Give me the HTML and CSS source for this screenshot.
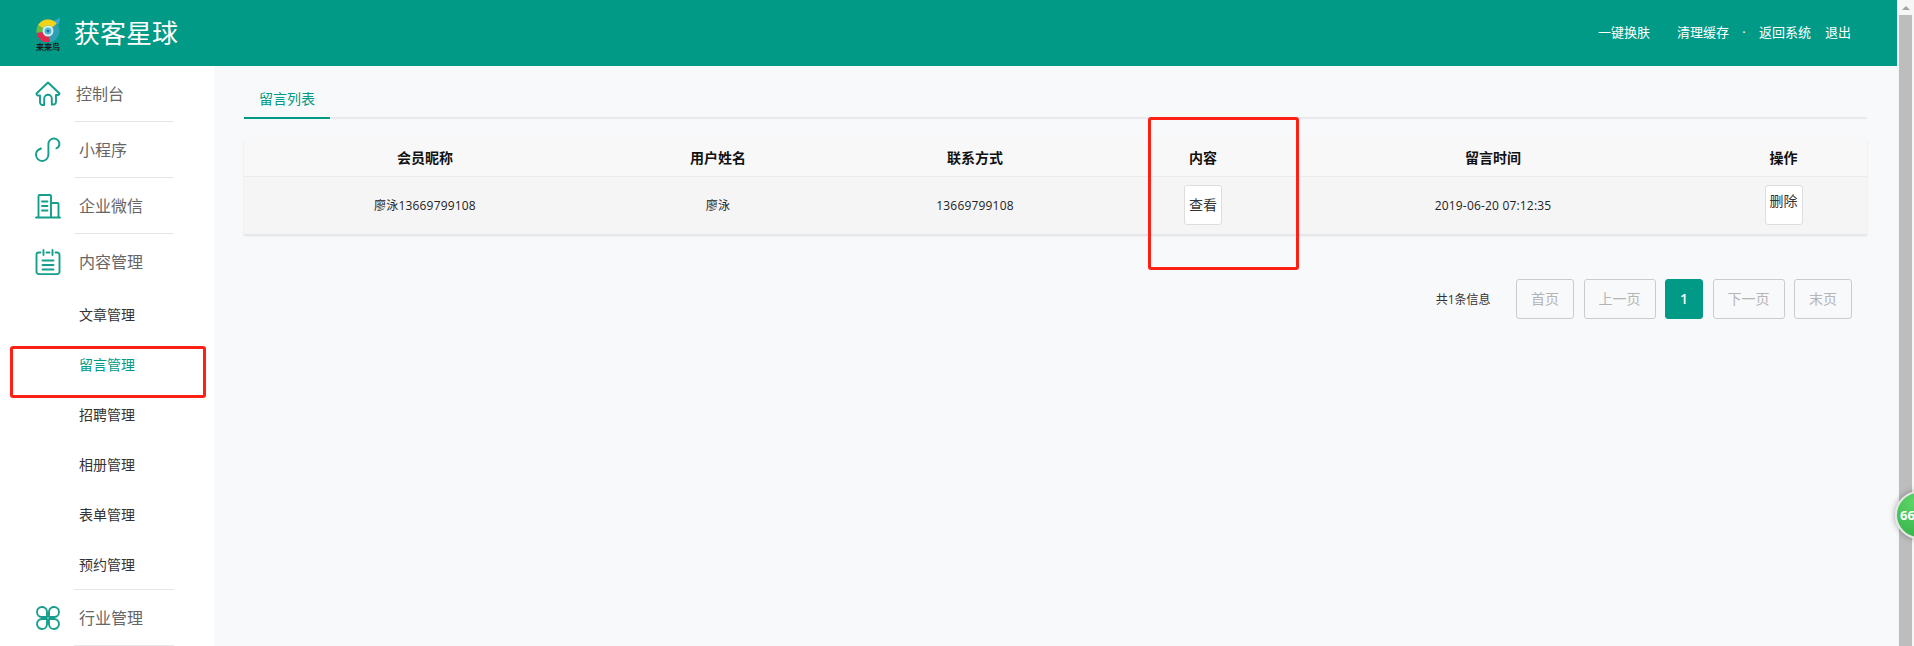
FILE: index.html
```html
<!DOCTYPE html>
<html lang="zh-CN">
<head>
<meta charset="utf-8">
<title>留言管理</title>
<link rel="stylesheet" href="styles.css">
</head>
<body>
<div class="page">
  <div class="main">
    <header class="topbar">
      <div class="brand">
        <div class="logo">
          <svg class="logo-mark" viewBox="0 0 24 25" width="24" height="25">
            <path d="M17 4c3-1 6-2 7-4 0 4-1 8-4 10z" fill="#35a9d8"/>
            <circle cx="12" cy="14" r="8.500" fill="none" stroke="#2f9fb4" stroke-width="6"/>
            <path d="M4.600 9.750A8.500 8.500 0 0 1 18.500 8.500" fill="none" stroke="#f4d21a" stroke-width="6"/>
            <path d="M3.640 15.500A8.500 8.500 0 0 1 4.600 9.750" fill="none" stroke="#6dbb3a" stroke-width="6"/>
            <path d="M13.500 22.400A8.500 8.500 0 0 1 3.640 15.500" fill="none" stroke="#e02a4d" stroke-width="6"/>
            <circle cx="12" cy="14" r="5.500" fill="#d5eef2"/>
            <circle cx="12" cy="14" r="3.500" fill="#4fbcd0"/>
            <circle cx="12" cy="14" r="1.500" fill="#1f6fb0"/>
          </svg>
          <span class="logo-text">来来鸟</span>
        </div>
        <span class="brand-name">获客星球</span>
      </div>
      <nav class="top-links">
        <a class="top-link link-skin">一键换肤</a>
        <a class="top-link">清理缓存</a>
        <span class="top-dot">·</span>
        <a class="top-link">返回系统</a>
        <a class="top-link link-exit">退出</a>
      </nav>
    </header>
    <div class="body">
      <aside class="sidebar">
        <div class="nav-group">
          <svg class="nav-icon" viewBox="0 0 26 26"><path d="M1.500 12.500 13 1.500l11.500 11a2 2 0 0 1-2.600 1.500H21v7a2.800 2.800 0 0 1-2.800 2.500h-1.400V17.500a3.800 3.800 0 0 0-7.600 0v6.500H7.800A2.800 2.800 0 0 1 5 21.500v-7H4.100a2 2 0 0 1-2.600-2z"/></svg>
          <span class="nav-label label-console">控制台</span>
        </div>
        <div class="nav-group">
          <svg class="nav-icon" viewBox="0 0 26 26"><path d="M6 11.500C3 12.500 1 15 1 17.800a6.200 6.200 0 0 0 12.400 0V7a5.500 5.500 0 0 1 11 0c0 2-1 3.500-3 4.300"/></svg>
          <span class="nav-label">小程序</span>
        </div>
        <div class="nav-group">
          <svg class="nav-icon" viewBox="0 0 26 26"><path d="M1 24.500h24M3.500 24V3a1 1 0 0 1 1-1h10.500a1 1 0 0 1 1 1V24M16 10h6.500a1 1 0 0 1 1 1V24M7 8.500h5.500M7 13h5.500M7 17.500h5.500"/></svg>
          <span class="nav-label">企业微信</span>
        </div>
        <div class="nav-group group-open">
          <svg class="nav-icon" viewBox="0 0 26 26"><path d="M5.500 3.500H3.800A2.300 2.300 0 0 0 1.500 5.800v17a2.300 2.300 0 0 0 2.300 2.300h18.400a2.300 2.300 0 0 0 2.300-2.300v-17a2.300 2.300 0 0 0-2.300-2.300h-1.700M8.500 1v5M17.500 1v5M11.500 3.500h3M7.500 11.500h11M7.500 16h11M7.500 20.500h11"/></svg>
          <span class="nav-label">内容管理</span>
        </div>
        <ul class="sub-nav">
          <li class="sub-item">文章管理</li>
          <li class="sub-item is-active">留言管理</li>
          <li class="sub-item">招聘管理</li>
          <li class="sub-item">相册管理</li>
          <li class="sub-item">表单管理</li>
          <li class="sub-item">预约管理</li>
        </ul>
        <div class="nav-group group-industry">
          <svg class="nav-icon" viewBox="0 0 26 26"><path d="M12 12H6.500A5 5 0 1 1 12 6.500zM14 12h5.500A5 5 0 1 0 14 6.500zM12 14H6.500A5 5 0 1 0 12 19.500zM14 14h5.500A5 5 0 1 1 14 19.500z"/></svg>
          <span class="nav-label">行业管理</span>
        </div>
      </aside>
      <main class="content">
        <div class="tabs"><span class="tab">留言列表</span></div>
        <table class="table">
          <colgroup>
            <col class="c1"><col class="c2"><col class="c3"><col class="c4"><col class="c5"><col class="c6">
          </colgroup>
          <thead>
            <tr><th>会员昵称</th><th>用户姓名</th><th>联系方式</th><th>内容</th><th>留言时间</th><th>操作</th></tr>
          </thead>
          <tbody>
            <tr>
              <td>廖泳13669799108</td>
              <td>廖泳</td>
              <td>13669799108</td>
              <td><button class="btn">查看</button></td>
              <td>2019-06-20 07:12:35</td>
              <td><button class="btn btn-top">删除</button></td>
            </tr>
          </tbody>
        </table>
        <div class="pager">
          <span class="pager-info">共1条信息</span>
          <span class="pg pg-2">首页</span>
          <span class="pg pg-3">上一页</span>
          <span class="pg pg-current">1</span>
          <span class="pg pg-3">下一页</span>
          <span class="pg pg-2">末页</span>
        </div>
      </main>
    </div>
  </div>
  <div class="scrollbar">
    <div class="sb-btn"><span class="sb-arrow"></span></div>
    <div class="sb-thumb"></div>
  </div>
  <div class="annot annot-nav"></div>
  <div class="annot annot-col"></div>
  <div class="ball"><span class="ball-num">66</span></div>
</div>
</body>
</html>
```

FILE: styles.css
```css
* { box-sizing: border-box; }
html, body { margin: 0; height: 100%; overflow: hidden; }
body {
  font-family: "Open Sans", "Noto Sans CJK SC", sans-serif;
  background: #f8f9fb;
  color: #333;
  font-size: 12px;
}
.page { position: relative; display: flex; width: 1914px; height: 646px; overflow: hidden; }
.main { flex: 1; min-width: 0; display: flex; flex-direction: column; }

.topbar {
  height: 66px;
  flex: none;
  background: #009a87;
  display: flex;
  align-items: center;
  justify-content: space-between;
  padding: 0 46px 0 35px;
  color: #fff;
}
.brand { display: flex; align-items: center; gap: 13px; }
.logo { width: 26px; display: flex; flex-direction: column; align-items: center; margin-top: 1px; }
.logo-mark { display: block; }
.logo-text { font-family: "Noto Sans CJK SC", serif; font-size: 8px; line-height: 9px; color: #1a1a1a; font-weight: 700; white-space: nowrap; }
.brand-name { font-size: 26px; line-height: 36px; margin-top: -3px; font-family: "Noto Sans CJK SC", sans-serif; }
.top-links { display: flex; align-items: center; font-size: 13px; line-height: 18px; margin-top: -2px; }
.top-link { display: block; }
.link-skin { margin-right: 27px; }
.top-dot { width: 30px; text-align: center; }
.link-exit { margin-left: 14px; }

.body { flex: 1; display: flex; min-height: 0; }
.sidebar { width: 214px; flex: none; background: #fff; }
.nav-group {
  height: 56px;
  margin-right: 40px;
  display: flex;
  align-items: center;
  position: relative;
}
.nav-group::after {
  content: "";
  position: absolute;
  left: 74px;
  width: 100px;
  bottom: 0;
  height: 1px;
  background: #e5e6e8;
}
.group-open::after { display: none; }
.group-industry::before {
  content: "";
  position: absolute;
  left: 74px;
  width: 100px;
  top: -1px;
  height: 1px;
  background: #e5e6e8;
}
.nav-icon {
  width: 26px;
  height: 26px;
  margin-left: 35px;
  fill: none;
  stroke: #149e8c;
  stroke-width: 1.900;
  stroke-linejoin: round;
  stroke-linecap: round;
  flex: none;
}
.nav-label { margin-left: 18px; font-size: 16px; color: #666; white-space: nowrap; line-height: 22px; }
.label-console { margin-left: 15px; }
.sub-nav { list-style: none; margin: 0; padding: 0; }
.sub-item { height: 50px; line-height: 50px; padding-left: 79px; font-size: 14px; color: #333; }
.sub-item.is-active { color: #009a87; }

.content { flex: 1; min-width: 0; padding: 0 30px; }
.tabs { height: 53px; border-bottom: 2px solid #e8eaec; display: flex; align-items: flex-end; }
.tab {
  width: 86px;
  height: 53px;
  margin-bottom: -2px;
  padding-top: 23px;
  text-align: center;
  font-size: 14px;
  line-height: 20px;
  color: #009a87;
  border-bottom: 2px solid #009a87;
}
.table {
  width: 100%;
  margin-top: 20px;
  table-layout: fixed;
  border-collapse: collapse;
  box-shadow: 0 1px 2px rgba(0,0,0,.1);
  color: #222;
}
.c1 { width: 362px; } .c2 { width: 224px; } .c3 { width: 290px; }
.c4 { width: 166px; } .c5 { width: 414px; } .c6 { width: 167px; }
.table th {
  height: 37px;
  padding: 0;
  font-size: 14px;
  font-weight: 700;
  color: #111;
  background: #f8f8f8;
  border-bottom: 1px solid #ebebeb;
}
.table td {
  height: 58px;
  padding: 0;
  text-align: center;
  font-size: 12px;
  letter-spacing: .18px;
  background: #f5f5f5;
  border-bottom: 1px solid #e6e6e6;
}
.btn {
  width: 38px;
  height: 40px;
  padding: 0;
  font: inherit;
  font-size: 14px;
  line-height: 20px;
  letter-spacing: 0;
  color: #333;
  background: #fff;
  border: 1px solid #ddd;
  border-radius: 3px;
  display: block;
  margin: 0 auto;
}
.btn-top { padding-bottom: 9px; }
.pager { display: flex; justify-content: flex-end; align-items: center; margin-top: 44px; padding-right: 15px; gap: 9.500px; }
.pager-info { margin-right: 16px; font-size: 12px; color: #333; }
.pg {
  height: 40px;
  line-height: 38px;
  border: 1px solid #ccc;
  border-radius: 3px;
  text-align: center;
  font-size: 14px;
  color: #b4b4b4;
}
.pg-2 { width: 58px; }
.pg-3 { width: 72px; }
.pg-current { width: 38px; background: #009a87; border-color: #009a87; color: #fff; font-weight: 600; }

.scrollbar { width: 17px; flex: none; background: #f6f6f6; display: flex; flex-direction: column; }
.sb-btn { height: 15px; flex: none; display: flex; align-items: center; justify-content: center; }
.sb-arrow { width: 0; height: 0; border: 4px solid transparent; border-top: 0; border-bottom: 4px solid #a3a3a3; }
.sb-thumb { flex: 1; background: #bdbdbd; margin: 0 2px; }

.annot { position: absolute; border: 3px solid #ff2015; border-radius: 3px; }
.annot-nav { left: 10px; top: 346px; width: 196px; height: 52px; }
.annot-col { left: 1148px; top: 117px; width: 151px; height: 153px; }

.ball {
  position: absolute;
  left: 1895px;
  top: 491px;
  width: 48px;
  height: 48px;
  border-radius: 50%;
  border: 2px solid #e6e6e6;
  background: radial-gradient(circle at 40% 20%, #5fd468, #3cb950 70%);
  box-shadow: 0 0 6px rgba(0,0,0,.35);
  color: #fff;
  font-weight: 700;
  font-size: 13px;
}
.ball-num { position: absolute; left: 3px; top: 12px; line-height: 20px; white-space: nowrap; }
```
